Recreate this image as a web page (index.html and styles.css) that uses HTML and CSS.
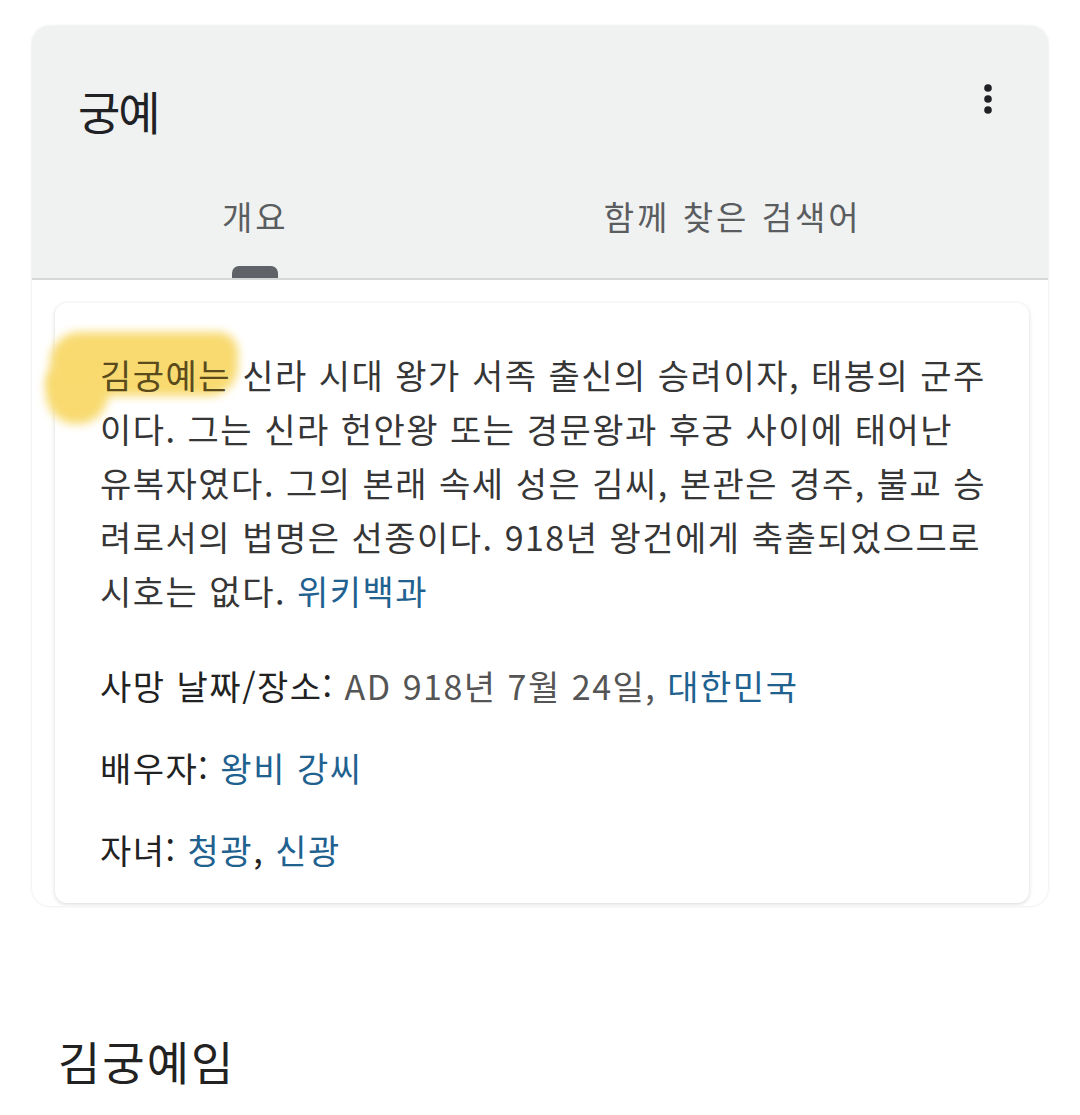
FILE: index.html
```html
<!DOCTYPE html>
<html lang="ko">
<head>
    <meta charset="UTF-8">
    <meta name="viewport" content="width=device-width, initial-scale=1.0">
    <title>궁예</title>
    <link rel="stylesheet" href="styles.css">
</head>
<body>
    <div class="panel">
        <div class="panel-head">
            <div class="title-row">
                <h1>궁예</h1>
                <svg class="more" width="12" height="34" viewBox="0 0 12 34">
                    <circle cx="6" cy="6" r="3.8" fill="#202124"/>
                    <circle cx="6" cy="17" r="3.8" fill="#202124"/>
                    <circle cx="6" cy="28" r="3.8" fill="#202124"/>
                </svg>
            </div>
            <div class="tabs">
                <div class="tab active">
                    <span>개요</span>
                    <div class="indicator"></div>
                </div>
                <div class="tab">
                    <span>함께 찾은 검색어</span>
                    <div class="indicator"></div>
                </div>
            </div>
        </div>

        <div class="panel-body">
            <div class="card">
                <p class="summary"><span class="marked">김궁예는</span> 신라 시대 왕가 서족 출신의 승려이자, 태봉의 군주<br>이다. 그는 신라 헌안왕 또는 경문왕과 후궁 사이에 태어난<br>유복자였다. 그의 본래 속세 성은 김씨, 본관은 경주, 불교 승<br>려로서의 법명은 선종이다. 918년 왕건에게 축출되었으므로<br>시호는 없다. <a href="#">위키백과</a></p>

                <div class="fact"><span class="label">사망 날짜/장소:</span> <span class="value">AD 918년 7월 24일,</span> <a href="#">대한민국</a></div>
                <div class="fact"><span class="label">배우자:</span> <a href="#">왕비 강씨</a></div>
                <div class="fact"><span class="label">자녀:</span> <a href="#">청광</a>, <a href="#">신광</a></div>
            </div>
        </div>
    </div>

    <p class="caption">김궁예임</p>
</body>
</html>
```

FILE: styles.css
```css
body {
    font-family: "Noto Sans CJK KR", "Noto Sans", sans-serif;
    margin: 0;
    padding: 0;
    background-color: #ffffff;
    color: #222;
}

.panel {
    margin: 26px 32px 0 32px;
    background: #fff;
    border-radius: 18px;
    box-shadow: 0 0 3px rgba(0, 0, 0, 0.12);
    overflow: hidden;
}

.panel-head {
    background-color: #f0f1f1;
    border-bottom: 2px solid #d6d7d7;
    padding-top: 54px;
}

.title-row {
    display: flex;
    justify-content: space-between;
    align-items: center;
    padding: 0 54px 0 46px;
    height: 60px;
}

.title-row h1 {
    margin: 0;
    font-size: 46px;
    font-weight: 400;
    line-height: 60px;
    letter-spacing: -2px;
    color: #202124;
}

.more {
    margin-top: -22px;
}

.tabs {
    display: flex;
    gap: 315px;
    padding-left: 190px;
    margin-top: 56px;
}

.tab {
    display: flex;
    flex-direction: column;
    align-items: center;
    font-size: 33px;
    line-height: 40px;
    color: #5a5d60;
    letter-spacing: 3px;
}

.tab .indicator {
    margin-top: 30px;
    width: 46px;
    height: 12px;
    border-radius: 7px 7px 0 0;
}

.tab.active .indicator {
    background-color: #5f6368;
}

.panel-body {
    padding: 23px 19px 3px 23px;
}

.card {
    background: #fff;
    border-radius: 12px;
    box-shadow: 0 1px 4px rgba(0, 0, 0, 0.16);
    padding: 45px 20px 26px 45px;
    font-size: 34px;
    letter-spacing: 1.5px;
}

.summary {
    margin: 0;
    line-height: 54px;
    color: #363636;
    white-space: nowrap;
}

/* marker highlight drawn over the first word */
.marked {
    position: relative;
    z-index: 0;
    color: #5a4a1c;
}

.marked::before,
.marked::after {
    content: "";
    position: absolute;
    background: #f8da70;
    filter: blur(5px);
    z-index: -1;
}

.marked::before {
    left: -50px;
    top: -18px;
    width: 188px;
    height: 64px;
    border-radius: 30px 20px 30px 10px;
}

.marked::after {
    left: -54px;
    top: 20px;
    width: 62px;
    height: 54px;
    border-radius: 10px 10px 30px 30px;
}

.card a {
    color: #1f6290;
    text-decoration: none;
}

.fact {
    line-height: 54px;
    margin-top: 28px;
}

.summary + .fact {
    margin-top: 41px;
}

.fact .label {
    color: #222;
}

.fact .value {
    color: #555;
}

.caption {
    margin: 124px 0 0 58px;
    font-size: 46px;
    line-height: 60px;
    letter-spacing: 2px;
    color: #222;
}
```
